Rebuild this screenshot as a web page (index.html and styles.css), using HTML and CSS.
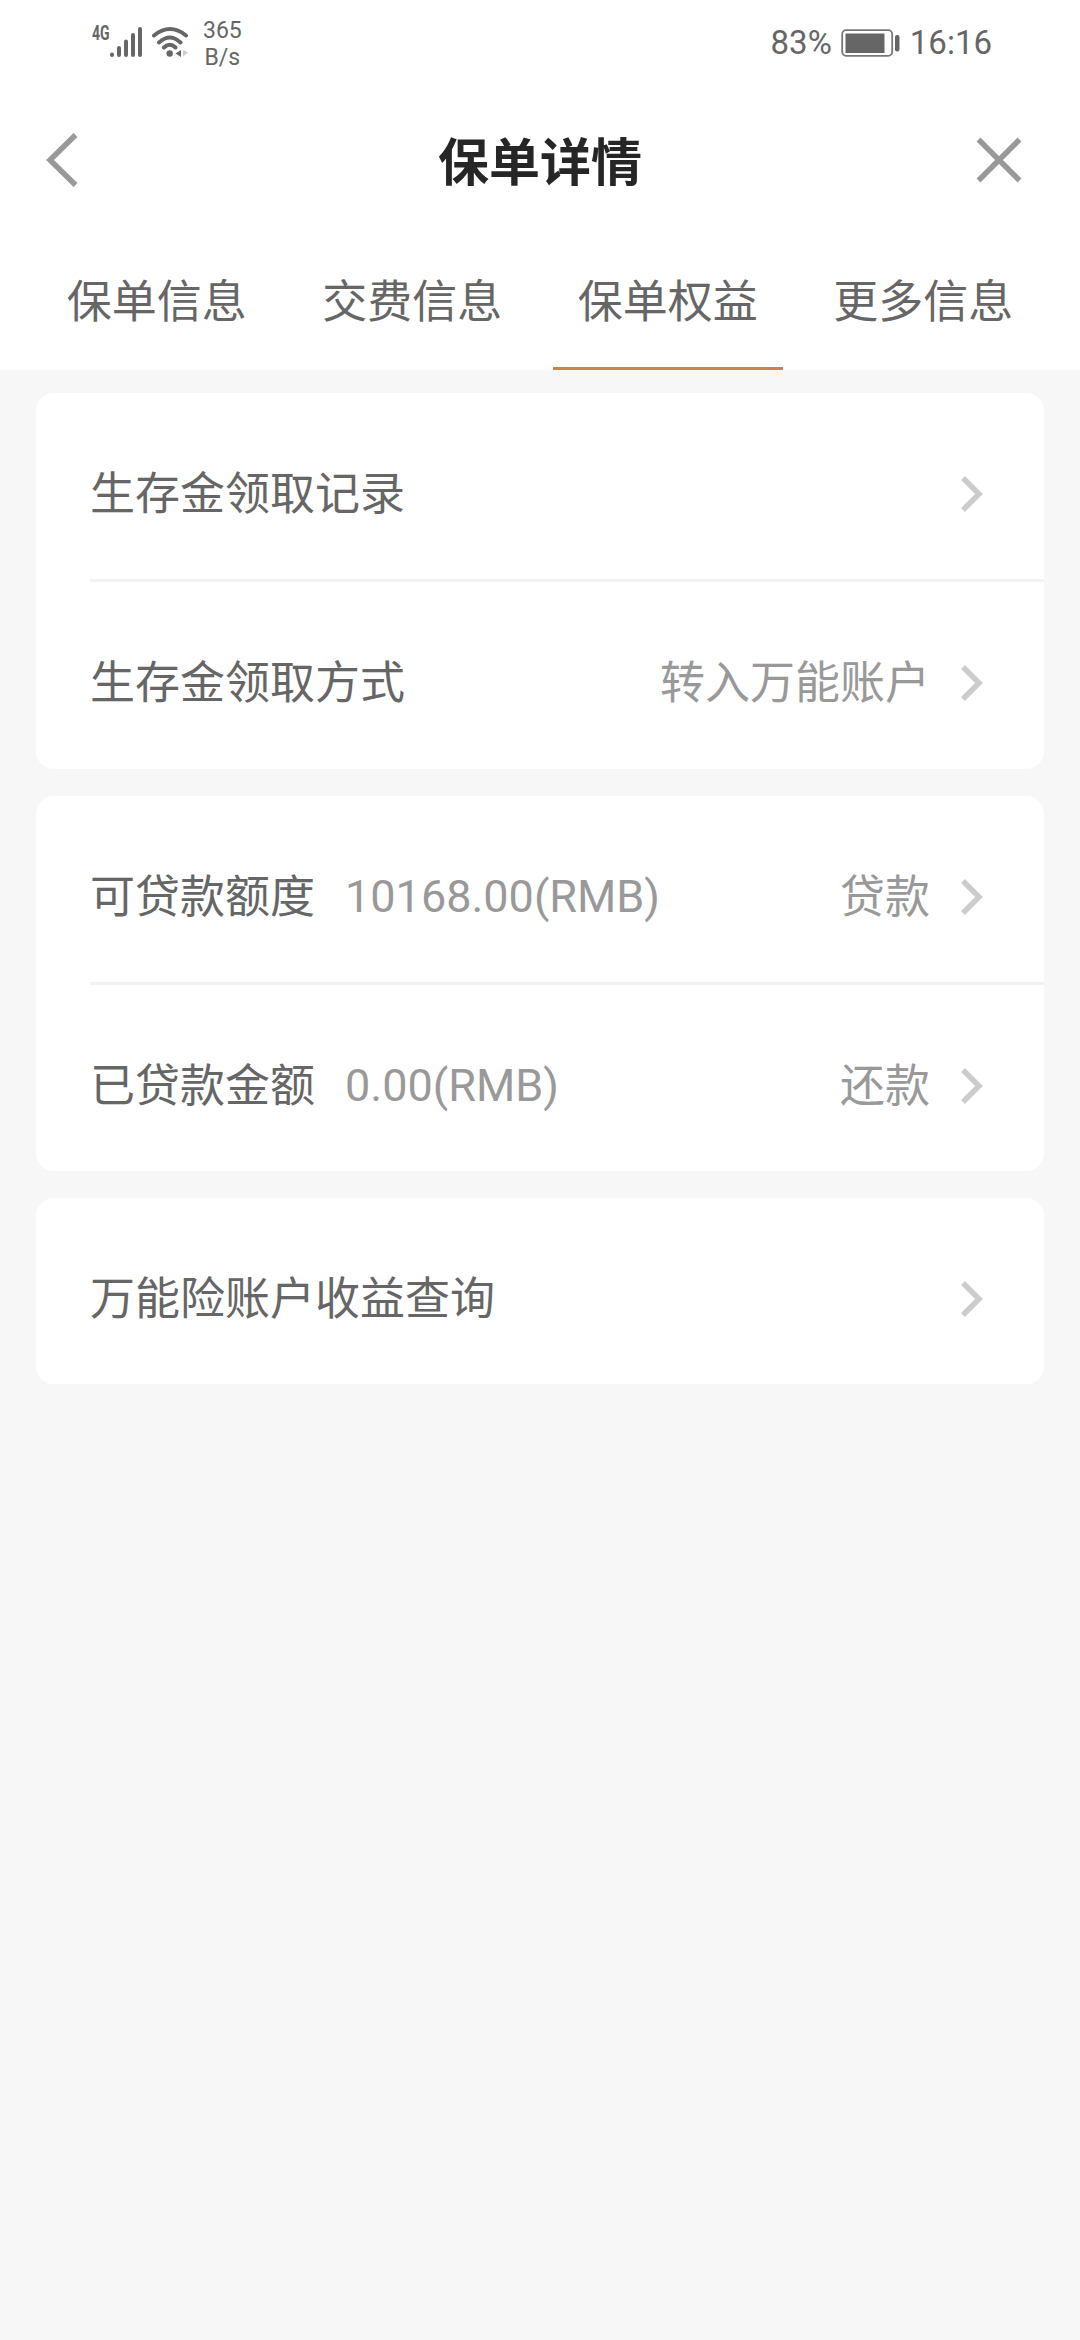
FILE: index.html
```html
<!DOCTYPE html>
<html lang="zh-CN">
  <head>
    <meta charset="UTF-8" />
    <meta name="viewport" content="width=device-width, initial-scale=1.0" />
    <title>保单详情</title>
    <link rel="stylesheet" href="styles.css">
  </head>
  <body>
    <div class="status-bar">
      <div class="status-left">
        <span class="network">4G</span>
        <svg class="signal" width="34" height="36" viewBox="0 0 34 36">
          <path d="M4 29.500v.5M11 23v7M18 16.500v13.500M25 10v20M32 4v26" />
        </svg>
        <svg class="wifi" width="40" height="36" viewBox="0 0 40 36">
          <path d="M4 10.500Q20 -2.500 36 10.500M9 17.500Q19.800 7.500 30.500 17.500M14 22.500Q19.800 17 25.500 22.500" />
          <circle cx="19.700" cy="28.500" r="3.200" />
          <path class="arrow" d="M25.500 28.500L31 25V32Z" />
          <path class="arrow faint" d="M33 25L38 27.500L33 31.500Z" />
        </svg>
        <div class="speed">
          <span>365</span>
          <span>B/s</span>
        </div>
      </div>
      <div class="status-right">
        <span>83%</span>
        <svg class="battery" width="60" height="30" viewBox="0 0 60 30">
          <rect class="battery-case" x="1.200" y="2.200" width="50" height="25.600" rx="4" />
          <rect x="4.500" y="5.500" width="39" height="19.500" />
          <rect x="54" y="7" width="4.500" height="16.500" rx="2" />
        </svg>
        <span>16:16</span>
      </div>
    </div>

    <header class="navbar">
      <svg class="nav-icon" width="32" height="56" viewBox="0 0 32 56">
        <path d="M29.500 3L4 28L29.500 53" />
      </svg>
      <h1>保单详情</h1>
      <svg class="nav-icon" width="46" height="46" viewBox="0 0 46 46">
        <path d="M2.500 2.500L43.500 43.500M43.500 2.500L2.500 43.500" />
      </svg>
    </header>

    <nav class="tabs">
      <a class="tab">保单信息</a>
      <a class="tab">交费信息</a>
      <a class="tab active">保单权益</a>
      <a class="tab">更多信息</a>
    </nav>

    <main class="content">
      <section class="card">
        <div class="row">
          <span class="label">生存金领取记录</span>
          <svg class="chevron" width="24" height="38" viewBox="0 0 24 38"><path d="M3 3L19 19L3 35" /></svg>
        </div>
        <div class="row">
          <span class="label">生存金领取方式</span>
          <span class="action">转入万能账户</span>
          <svg class="chevron" width="24" height="38" viewBox="0 0 24 38"><path d="M3 3L19 19L3 35" /></svg>
        </div>
      </section>

      <section class="card">
        <div class="row">
          <span class="label">可贷款额度</span>
          <span class="amount">10168.00(RMB)</span>
          <span class="action">贷款</span>
          <svg class="chevron" width="24" height="38" viewBox="0 0 24 38"><path d="M3 3L19 19L3 35" /></svg>
        </div>
        <div class="row">
          <span class="label">已贷款金额</span>
          <span class="amount">0.00(RMB)</span>
          <span class="action">还款</span>
          <svg class="chevron" width="24" height="38" viewBox="0 0 24 38"><path d="M3 3L19 19L3 35" /></svg>
        </div>
      </section>

      <section class="card">
        <div class="row">
          <span class="label">万能险账户收益查询</span>
          <svg class="chevron" width="24" height="38" viewBox="0 0 24 38"><path d="M3 3L19 19L3 35" /></svg>
        </div>
      </section>
    </main>
  </body>
</html>
```

FILE: styles.css
```css
* {
  box-sizing: border-box;
}
body {
  margin: 0;
  min-height: 2340px;
  background-color: #f7f7f7;
  font-family: Roboto, "Noto Sans CJK SC", sans-serif;
  font-size: 45px;
  color: #666;
}
svg {
  display: block;
  flex: none;
}

/* Status bar */
.status-bar {
  display: flex;
  justify-content: space-between;
  height: 90px;
  padding: 0 88px 4px 92px;
  background-color: #fff;
}
.status-left,
.status-right {
  display: flex;
  align-items: center;
}
.network {
  width: 16px;
  margin-bottom: 18px;
  font-size: 19.5px;
  font-weight: bold;
  line-height: 24px;
  transform: scaleX(0.72);
  transform-origin: left;
}
.signal {
  stroke: #666;
  stroke-width: 4;
  stroke-linecap: round;
}
.wifi {
  margin-left: 8px;
  fill: #666;
}
.wifi path {
  fill: none;
  stroke: #666;
  stroke-width: 4;
  stroke-linecap: round;
}
.wifi .arrow {
  fill: #666;
  stroke: none;
}
.wifi .faint {
  fill: #ccc;
}
.speed {
  display: flex;
  flex-direction: column;
  align-items: center;
  margin-left: 13px;
  padding-top: 2px;
  font-size: 23px;
  line-height: 27px;
}
.status-right {
  font-size: 33px;
  line-height: 40px;
}
.battery {
  margin: 0 9px 0 9px;
  fill: #666;
}
.battery-case {
  fill: none;
  stroke: #777;
  stroke-width: 1.8;
}

/* Title bar */
.navbar {
  display: grid;
  grid-template-columns: 1fr auto 1fr;
  align-items: center;
  height: 140px;
  padding: 0 58px 0 46px;
  background-color: #fff;
}
.navbar h1 {
  margin: 0;
  padding: 7px 0 0 12px;
  font-size: 51px;
  line-height: 76px;
  color: #262626;
}
.nav-icon {
  fill: none;
  stroke: #999;
  stroke-width: 5.5;
}
.nav-icon:last-child {
  justify-self: end;
}

/* Tabs */
.tabs {
  display: flex;
  gap: 26px;
  height: 140px;
  padding: 0 42px;
  background-color: #fff;
}
.tab {
  flex: 1;
  padding-top: 40px;
  line-height: 66px;
  text-align: center;
}
.tab.active {
  border-bottom: 3px solid #c8834f;
}

/* Cards */
.content {
  display: flex;
  flex-direction: column;
  gap: 27px;
  padding: 23px 36px;
}
.card {
  padding-left: 54px;
  border-radius: 18px;
  background-color: #fff;
}
.row {
  display: flex;
  align-items: center;
  height: 186.25px;
  padding: 16px 60px 0 0;
  line-height: 66px;
}
.row + .row {
  height: 189.25px;
  border-top: 3px solid #f2f2f2;
}
.label,
.action {
  padding-top: 2px;
}
.amount {
  margin-left: 30px;
  color: #999;
}
.action {
  margin-left: auto;
  color: #999;
}
.chevron {
  margin-left: auto;
  fill: none;
  stroke: #ccc;
  stroke-width: 5.5;
}
.action + .chevron {
  margin-left: 30px;
}
```
